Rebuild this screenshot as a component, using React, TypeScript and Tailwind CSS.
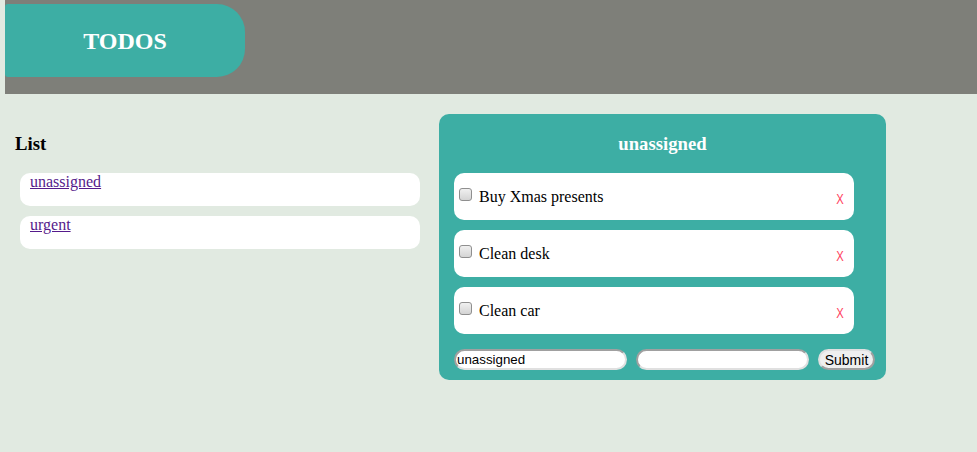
import React from "react";

const todos = ["Buy Xmas presents", "Clean desk", "Clean car"];

export default function App() {
  return (
    <div className="min-h-[452px] w-full bg-[#e1eae1] pl-[5px]" style={{ fontFamily: '"Liberation Serif", "Times New Roman", serif' }}>
      <header className="flex h-[94px] items-start bg-[#7e7f79] pt-[4px]">
        <div className="flex h-[73px] w-[240px] items-center justify-center rounded-l-[3px] rounded-r-[28px] bg-[#3daea4]">
          <h1 className="text-[24px] font-bold text-white">TODOS</h1>
        </div>
      </header>
      <div className="flex items-start">
        <div className="w-[434px] pl-[10px] pt-[39px]">
          <h3 className="text-[18.72px] font-bold leading-[22px] text-black">List</h3>
          <div className="mt-[18px] flex flex-col gap-[10px] pl-[5px]">
            {["unassigned", "urgent"].map((l) => (
              <div key={l} className="h-[33px] w-[400px] rounded-[10px] bg-white pl-[10px] pt-[1px]">
                <a href="#" className="block text-[16px] leading-[16px] text-[#551a8b] underline">
                  {l}
                </a>
              </div>
            ))}
          </div>
        </div>
        <div className="mt-[20px] w-[447px] rounded-[10px] bg-[#3daea4] px-[15px] pb-[10px] pt-[19px]">
          <h2 className="text-center text-[18.72px] font-bold leading-[22px] text-white">unassigned</h2>
          <div className="mt-[18px] flex flex-col gap-[10px]">
            {todos.map((t) => (
              <div key={t} className="flex h-[47px] w-[400px] items-center rounded-[10px] bg-white pl-[5px] pr-[9px]">
                <span className="mb-[5px] block h-[13px] w-[13px] rounded-[3px] border border-[#8f8f8f] bg-gradient-to-b from-[#f0f0f0] to-[#d4d4d4]" />
                <span className="ml-[7px] text-[16px] text-black">{t}</span>
                <span className="ml-auto mt-[6px] inline-block scale-x-75 text-[15px] text-[#ff3f5f]" style={{ fontFamily: '"Liberation Sans", Arial, sans-serif' }}>
                  X
                </span>
              </div>
            ))}
          </div>
          <div className="mt-[15px] flex w-[430px] items-center gap-[9px]" style={{ fontFamily: '"Liberation Sans", Arial, sans-serif' }}>
            <input
              defaultValue="unassigned"
              className="h-[21px] w-[173px] shrink-0 rounded-full border-2 border-[#a0a0a0] border-r-[#e0e0e0] border-b-[#e0e0e0] bg-white px-[1px] text-[13.33px] text-black outline-none"
            />
            <input className="h-[21px] w-[173px] shrink-0 rounded-full border-2 border-[#a0a0a0] border-r-[#e0e0e0] border-b-[#e0e0e0] bg-white px-[1px] text-[13.33px] text-black outline-none" />
            <button className="h-[21px] w-[57px] shrink-0 rounded-full border-2 border-[#e0e0e0] border-r-[#a0a0a0] border-b-[#a0a0a0] bg-[#efefef] text-[14px] leading-none text-black">
              Submit
            </button>
          </div>
        </div>
      </div>
    </div>
  );
}
